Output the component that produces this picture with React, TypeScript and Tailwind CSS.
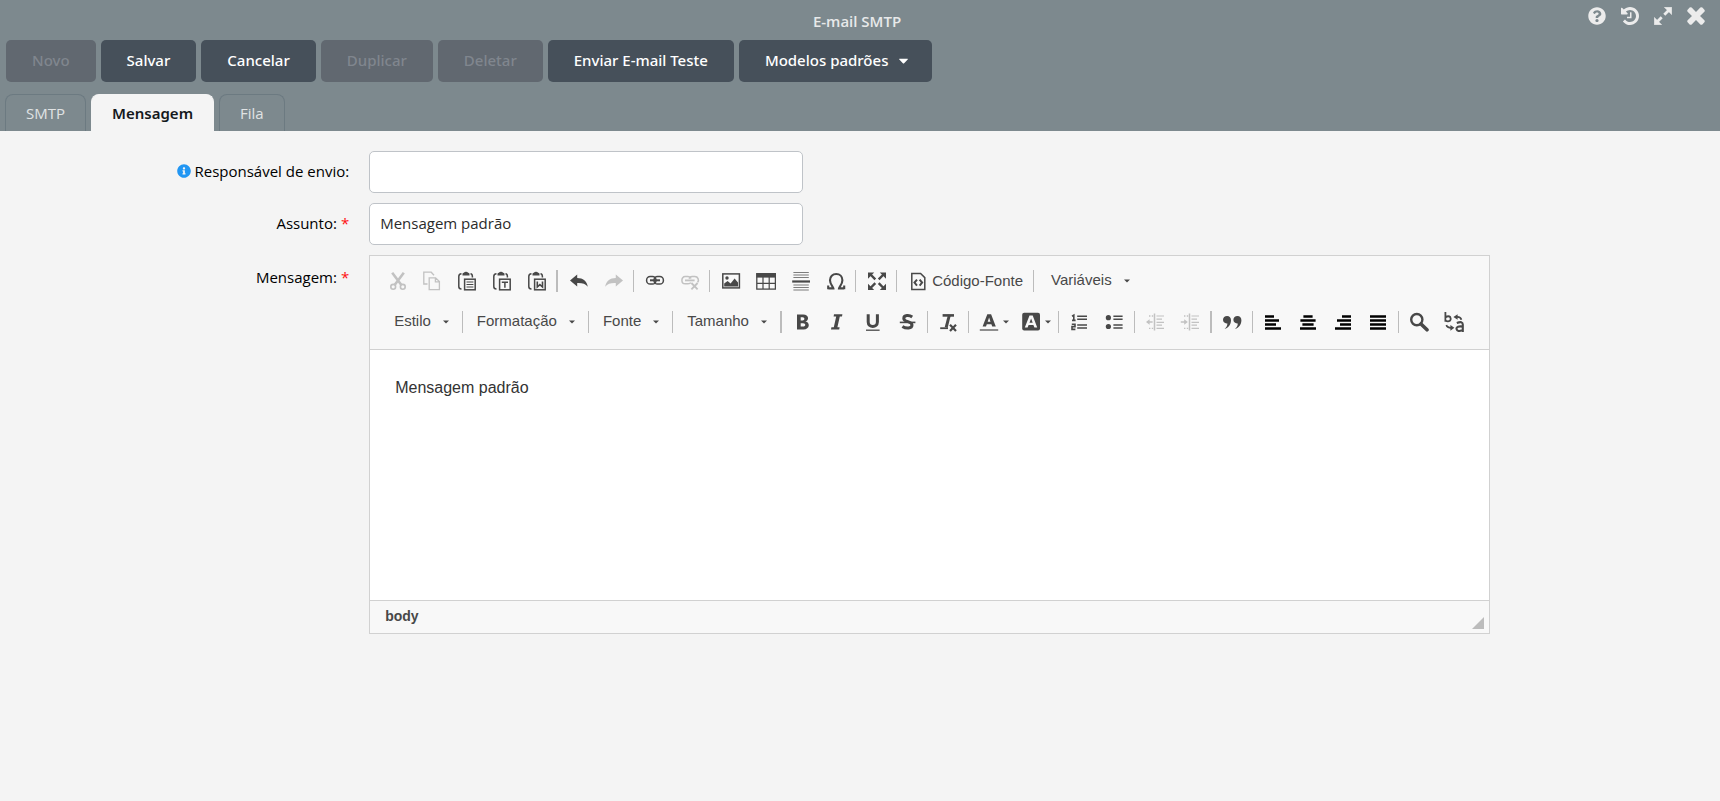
import React from "react";
import { FaCaretDown, FaInfoCircle, FaQuestionCircle } from "react-icons/fa";

function Glyph({ children }: { children: React.ReactNode }) {
  return (
    <svg
      width="20"
      height="20"
      viewBox="0 0 20 20"
      fill="none"
      stroke="currentColor"
      strokeWidth="1.5"
      aria-hidden="true"
      className="shrink-0"
    >
      {children}
    </svg>
  );
}

const clipboard = (
  <>
    <path d="M4.5 2.8 Q1.8 3 1.8 5.5 V15.5 Q1.8 18 4.5 18" />
    <path d="M13.5 2.8 Q15.4 3 15.4 5.5 V6.5" />
    <path d="M5.5 4.6 V3 Q5.5 1.8 7 1.8 Q7.3 .8 9 .8 Q10.7 .8 11 1.8 Q12.5 1.8 12.5 3 V4.6 Z" fill="currentColor" stroke="none" />
    <rect x="7.6" y="8.2" width="10.6" height="10.6" />
  </>
);

const icons = {
  cut: (
    <>
      <path d="M5.2 1.8 L14.4 14 M16.8 1.8 L7.6 14" strokeWidth="2.6" />
      <circle cx="6.2" cy="15.8" r="2.4" strokeWidth="1.6" />
      <circle cx="15.8" cy="15.8" r="2.4" strokeWidth="1.6" />
    </>
  ),
  copy: (
    <>
      <path d="M5.5 13 H1.8 V1.2 H9.2 L12 4.2" strokeWidth="1.3" />
      <path d="M7.2 6.8 H13.6 L17.4 10.6 V18.6 H7.2 Z M13.4 7 V10.8 H17.4" strokeWidth="1.3" />
    </>
  ),
  paste: (
    <>
      {clipboard}
      <path d="M9.5 11 H16.4 M9.5 13.5 H16.4 M9.5 16 H16.4" strokeWidth="1.2" />
    </>
  ),
  pasteText: (
    <>
      {clipboard}
      <path d="M9.8 11.2 H16 M12.9 11 V16.8" />
    </>
  ),
  pasteWord: (
    <>
      {clipboard}
      <path d="M10.3 10.4 V16 L12.9 13.6 L15.5 16 V10.4" strokeWidth="1.6" />
    </>
  ),
  undo: (
    <path d="M1 9.4 L8.2 3.4 V7 C14 7 18 9.8 18.8 15.8 C16.4 12.6 13 11.8 8.2 12 V15.6 Z" fill="currentColor" stroke="none" />
  ),
  redo: (
    <path d="M19 9.4 L11.8 3.4 V7 C6 7 2 9.8 1.2 15.8 C3.6 12.6 7 11.8 11.8 12 V15.6 Z" fill="currentColor" stroke="none" />
  ),
  link: (
    <>
      <rect x="1.6" y="5.6" width="9.4" height="7.4" rx="3.6" strokeWidth="1.5" />
      <rect x="9" y="5.6" width="9.4" height="7.4" rx="3.6" strokeWidth="1.5" />
      <path d="M5 9.3 H15" strokeWidth="2" />
    </>
  ),
  unlink: (
    <>
      <path d="M10.8 11.6 C10 12.8 9 12.8 5.2 12.8 C.8 12.8 .8 5.6 5.2 5.6 H8 C9.6 5.6 10.6 6.4 11 7.6" />
      <path d="M9 7.6 C9.6 6.2 10.6 5.6 12 5.6 H14.8 C18 5.6 19.4 9 17.6 11.4" />
      <path d="M5 9.4 H14.6" strokeWidth="1.8" />
      <path d="M11.4 12 L17.6 18.4 M17.6 12 L11.4 18.4" strokeWidth="1.8" />
    </>
  ),
  image: (
    <>
      <rect x="1.8" y="2.9" width="16.6" height="14" strokeWidth="1.5" />
      <circle cx="6" cy="7" r="1.7" fill="currentColor" stroke="none" />
      <path d="M3.2 15.6 V12.4 L6.6 10 L9.6 12.6 L13.6 7.6 L17 11.6 V15.6 Z" fill="currentColor" stroke="none" />
    </>
  ),
  table: (
    <>
      <rect x=".8" y="2.7" width="18.6" height="15.4" strokeWidth="1.3" />
      <path d="M.4 2.2 H19.8 V6.6 H.4 Z" fill="currentColor" stroke="none" />
      <path d="M1 12.4 H19.4 M7 6 V18 M13.2 6 V18" strokeWidth="1.2" />
    </>
  ),
  rule: (
    <>
      <path d="M2.4 1.5 H17.8 M2.4 4 H17.8 M2.4 6.5 H17.8 M2.4 14 H17.8 M2.4 16.5 H17.8 M2.4 19 H17.8" strokeWidth="1.2" opacity=".7" />
      <path d="M1.2 10.5 H19" strokeWidth="2.2" />
    </>
  ),
  omega: (
    <path d="M2.4 17.4 H7.4 C7.2 15.4 4 13.6 4 9.2 C4 5.4 6.6 3 10.2 3 C13.8 3 16.4 5.4 16.4 9.2 C16.4 13.6 13.2 15.4 13 17.4 H18 M2.2 18.3 V14.6 M18.2 18.3 V14.6" strokeWidth="2.1" />
  ),
  maximize: (
    <>
      <path d="M3.5 3.5 L8.3 8.3 M16.5 3.5 L11.7 8.3 M3.5 17 L8.3 12.2 M16.5 17 L11.7 12.2" strokeWidth="2.4" />
      <path
        d="M1 1.6 H7.2 L1 7.8 Z M19 1.6 H12.8 L19 7.8 Z M1 19 V12.8 L7.2 19 Z M19 19 V12.8 L12.8 19 Z"
        fill="currentColor"
        stroke="none"
      />
    </>
  ),
  source: (
    <>
      <path d="M3.8 2.4 H12.6 L16.8 6.6 V18.6 H3.8 Z" strokeWidth="1.5" />
      <path d="M9 8.6 L6.500 11.6 L9 14.6 M11.6 8.6 L14.1 11.6 L11.6 14.6" strokeWidth="2" />
    </>
  ),
  bold: (
    <path
      d="M5 2.4 H11.2 C17.2 2.4 17.4 8.4 13.4 9.4 C18.4 10.2 18 17.4 11.6 17.4 H5 Z M8.7 5.2 V8.4 H10.6 C13 8.4 13 5.2 10.6 5.2 Z M8.7 11.2 V14.6 H11 C14 14.6 14 11.2 11 11.2 Z"
      fill="currentColor"
      fillRule="evenodd"
      stroke="none"
    />
  ),
  italic: (
    <path d="M7 2.2 H15.4 L15 4.6 H12.8 L10.4 15.2 H12.6 L12.2 17.4 H4 L4.4 15.2 H6.8 L9.2 4.6 H6.6 Z" fill="currentColor" stroke="none" />
  ),
  underline: (
    <>
      <path d="M6.2 2.2 V10 C6.2 16 15.4 16 15.4 10 V2.2" strokeWidth="3" />
      <path d="M4 18.2 H17.6" strokeWidth="1.3" />
    </>
  ),
  strike: (
    <>
      <path d="M15.2 5 C12.2 2.8 6.8 3 6.8 6.4 C6.8 10.2 15 9.2 15 13 C15 16.8 9 16.8 5.4 14.4" strokeWidth="3" />
      <path d="M2.8 10.4 H18.4" strokeWidth="1.6" />
    </>
  ),
  removeFormat: (
    <>
      <path d="M4.6 3.4 H16" strokeWidth="2.6" />
      <path d="M11.4 3 L8.2 15.4" strokeWidth="3" />
      <path d="M2.2 16.2 H10" strokeWidth="1.8" />
      <path d="M12 12.8 L18 19 M18 12.8 L12 19" strokeWidth="2.2" />
    </>
  ),
  textColor: (
    <>
      <path
        d="M8.3 2.2 H12.1 L16.8 14.6 H13.2 L12.4 12.2 H7.8 L7 14.6 H3.6 Z M10.1 5.6 L8.7 9.8 H11.5 Z"
        fill="currentColor"
        fillRule="evenodd"
        stroke="none"
      />
      <path d="M.8 18 H19.2" strokeWidth="2" opacity=".6" />
    </>
  ),
  fillColor: (
    <>
      <rect x="1.2" y=".8" width="17.8" height="17.8" rx="2" fill="currentColor" stroke="none" />
      <path
        d="M8.5 3.4 H11.7 L16.2 15.6 H13.4 L12.4 13 H7.6 L6.6 15.6 H3.8 Z M10.1 6.4 L8.5 10.8 H11.7 Z"
        fill="#f8f8f8"
        fillRule="evenodd"
        stroke="none"
      />
    </>
  ),
  ordered: (
    <>
      <path d="M8.2 4.2 H18 M8.2 7.2 H18 M8.2 13 H18 M8.2 16 H18" strokeWidth="1.4" />
      <path d="M3 4.2 L4.8 3.2 V8.6 M3 8.4 H6.6 M2.8 12.2 H6 V14.6 H3 V17.4 H6.4" strokeWidth="1.6" />
    </>
  ),
  bullets: (
    <>
      <path d="M9.4 4.2 H18.6 M9.4 7.2 H18.6 M9.4 13 H18.6 M9.4 16 H18.6" strokeWidth="1.5" />
      <circle cx="4.4" cy="5.7" r="2.6" fill="currentColor" stroke="none" />
      <circle cx="4.4" cy="14.5" r="2.6" fill="currentColor" stroke="none" />
    </>
  ),
  outdent: (
    <>
      <path d="M9.5 1.5 V18.5" />
      <path d="M11.5 4 H19 M11.5 7.2 H17 M11.5 10.4 H19 M11.5 13.2 H17 M11.5 16.4 H19" strokeWidth="1.2" />
      <path d="M4 4 H5.4 M6.8 4 H8.2 M4 16.4 H5.4 M6.8 16.4 H8.2 M2 10 H7.6" strokeWidth="1.3" />
      <path d="M1 10 L4.6 7.2 V12.8 Z" fill="currentColor" stroke="none" />
    </>
  ),
  indent: (
    <>
      <path d="M9.5 1.5 V18.5" />
      <path d="M11.5 4 H19 M11.5 7.2 H17 M11.5 10.4 H19 M11.5 13.2 H17 M11.5 16.4 H19" strokeWidth="1.2" />
      <path d="M4 4 H5.4 M6.8 4 H8.2 M4 16.4 H5.4 M6.8 16.4 H8.2 M.8 10 H6" strokeWidth="1.3" />
      <path d="M7.8 10 L4.2 7.2 V12.8 Z" fill="currentColor" stroke="none" />
    </>
  ),
  quote: (
    <path
      d="M5 4 C7.6 4 9 5.8 9 8.2 C9 12.6 6.6 15.6 2.6 17 C4.4 15.2 5.4 13.4 5.4 11.4 C2.8 11.8 1 10 1 7.8 C1 5.6 2.8 4 5 4 Z M15.4 4 C18 4 19.4 5.8 19.4 8.2 C19.4 12.6 17 15.6 13 17 C14.8 15.2 15.8 13.4 15.8 11.4 C13.2 11.8 11.4 10 11.4 7.8 C11.4 5.6 13.2 4 15.4 4 Z"
      fill="currentColor"
      stroke="none"
    />
  ),
  left: (
    <path d="M2 4.5 H11 M2 8.5 H16 M2 12.5 H13 M2 16.5 H18" stroke="#000" strokeWidth="2.4" />
  ),
  center: (
    <path d="M5.4 4.5 H14.6 M2.4 8.5 H17.6 M4.4 12.5 H15.6 M2 16.5 H18" stroke="#000" strokeWidth="2.4" />
  ),
  right: (
    <path d="M9 4.5 H18 M4 8.5 H18 M7 12.5 H18 M2 16.5 H18" stroke="#000" strokeWidth="2.4" />
  ),
  justify: (
    <path d="M2 4.5 H18 M2 8.5 H18 M2 12.5 H18 M2 16.5 H18" stroke="#000" strokeWidth="2.4" />
  ),
  find: (
    <>
      <circle cx="7.8" cy="7.6" r="5.6" strokeWidth="2.4" />
      <path d="M12 12 L18 17.8" strokeWidth="3.6" strokeLinecap="round" />
    </>
  ),
  replace: (
    <>
      <path d="M1.4 0 V9.8 M1.4 5.4 Q4.4 3.4 6.2 5 Q7.2 6.8 6.2 8.6 Q4 10 1.4 8.6" strokeWidth="1.8" />
      <path d="M12.800 11 Q18.800 8.600 18.800 12.600 V20 M18.800 14.600 Q12.400 13.600 12.400 16.800 Q13.600 20.800 18.800 17.600" strokeWidth="2.1" />
      <path d="M12 5 Q16.6 4.4 17.4 7.8 M2.4 13 Q3 16 8 15.8" strokeWidth="1.7" />
      <path d="M9.4 5 L13.6 2.2 V7.8 Z M10.4 15.8 L6.4 13 V18.8 Z" fill="currentColor" stroke="none" />
    </>
  ),
};

function HistoryIcon() {
  return (
    <svg width="18" height="18" viewBox="0 128 1536 1536" fill="currentColor" aria-hidden="true">
      <path d="M1536 896q0 156-61 298t-164 245-245 164-298 61q-172 0-327-72.500t-264-204.500q-7-10-6.500-22.500t8.500-20.500l137-138q10-9 25-9 16 2 23 12 73 95 179 147t225 52q104 0 198.500-40.500t163.500-109.500 109.500-163.500 40.500-198.500-40.500-198.500-109.500-163.500-163.500-109.500-198.500-40.500q-98 0-188 35.500t-160 101.500l137 138q31 30 14 69-17 40-59 40h-448q-26 0-45-19t-19-45v-448q0-42 40-59 39-17 69 14l130 129q107-101 244.500-156.500t284.500-55.500q156 0 298 61t245 164 164 245 61 298zm-640-288v448q0 14-9 23t-23 9h-320q-14 0-23-9t-9-23v-64q0-14 9-23t23-9h224v-352q0-14 9-23t23-9h64q14 0 23 9t9 23z" />
    </svg>
  );
}

function ExpandIcon() {
  return (
    <svg width="18" height="18" viewBox="0 0 18 18" fill="currentColor" aria-hidden="true">
      <path d="M17.7 .3 V7.6 L10.4 .3 Z M.3 17.7 V10.4 L7.6 17.700 Z" stroke="currentColor" strokeWidth=".6" strokeLinejoin="round" />
      <path d="M15.5 2.5 L10.300 7.700 M2.500 15.500 L7.700 10.300" stroke="currentColor" strokeWidth="2.800" />
    </svg>
  );
}

function CloseIcon() {
  return (
    <svg width="18" height="18" viewBox="96 352 1216 1216" fill="currentColor" aria-hidden="true">
      <path d="M1298 1322q0 40-28 68l-136 136q-28 28-68 28t-68-28l-294-294-294 294q-28 28-68 28t-68-28l-136-136q-28-28-28-68t28-68l294-294-294-294q-28-28-28-68t28-68l136-136q28-28 68-28t68 28l294 294 294-294q28-28 68-28t68 28l136 136q28 28 28 68t-28 68l-294 294 294 294q28 28 28 68z" />
    </svg>
  );
}

function Arrow() {
  return (
    <svg width="6" height="4" viewBox="0 0 6 4" fill="currentColor" aria-hidden="true" className="shrink-0">
      <path d="M0 .4 H6 L3 3.6 Z" />
    </svg>
  );
}

function Tool({ icon, label, disabled = false }: { icon: keyof typeof icons; label: string; disabled?: boolean }) {
  return (
    <button
      type="button"
      aria-label={label}
      disabled={disabled}
      className="flex h-8 w-[35px] items-center justify-center disabled:opacity-30"
    >
      <Glyph>{icons[icon]}</Glyph>
    </button>
  );
}

function ColorTool({ icon, label }: { icon: keyof typeof icons; label: string }) {
  return (
    <button type="button" aria-label={label} className="flex h-8 items-center gap-1 pr-[5px] pl-[7px]">
      <Glyph>{icons[icon]}</Glyph>
      <Arrow />
    </button>
  );
}

function Combo({ label }: { label: string }) {
  return (
    <button type="button" className="flex h-8 items-center gap-3 px-[11px] text-[15px]">
      <span className="pb-0.5">{label}</span>
      <Arrow />
    </button>
  );
}

function Divider({ thick = false }: { thick?: boolean }) {
  return (
    <span
      className={
        thick
          ? "mr-[3px] ml-0.5 h-[22px] w-0.5 bg-[#bcbcbc]"
          : "mr-[3px] ml-0.5 h-[22px] w-px bg-[#bcbcbc]"
      }
    />
  );
}

function Action({ label, disabled = false }: { label: string; disabled?: boolean }) {
  return (
    <button
      type="button"
      disabled={disabled}
      className="h-[42px] rounded-[5px] bg-[#46505a] px-[26px] pb-0.5 font-['Noto_Sans',sans-serif] font-medium text-white disabled:bg-[#616870] disabled:text-[#80868e]"
    >
      {label}
    </button>
  );
}

function Tab({ label, active = false }: { label: string; active?: boolean }) {
  return (
    <button
      type="button"
      role="tab"
      aria-selected={active}
      className={
        active
          ? "h-[37px] rounded-t-lg border border-b-0 border-[#f4f4f4] bg-[#f4f4f4] px-5 font-['Noto_Sans',sans-serif] font-semibold text-[#14191c]"
          : "h-[37px] rounded-t-lg border border-b-0 border-[#6c7a81] px-5 text-[#e0e3e4]"
      }
    >
      {label}
    </button>
  );
}

const fieldClass =
  "h-[42px] w-[25.2%] rounded-[5px] border border-[#bfc3c8] bg-white px-2.5 pb-0.5 text-[#2b2b2b] outline-none";

function Label({ htmlFor, children }: { htmlFor: string; children: React.ReactNode }) {
  return (
    <label htmlFor={htmlFor} className="flex h-10 w-[20.3%] shrink-0 items-center justify-end text-black">
      {children}
    </label>
  );
}

const required = <span className="ml-1 text-[#ff1010]">*</span>;

export default function App() {
  return (
    <div className="min-h-screen bg-[#f4f4f4] font-['Open_Sans',sans-serif] text-[15px]">
      <header className="bg-[#7d898e]">
        <div className="grid h-10 grid-cols-[1fr_auto_1fr] pr-[15px] pl-[9px]">
          <h1 className="col-start-2 pt-2.5 font-semibold text-[#e8e9ea]">E-mail SMTP</h1>
          <div className="flex items-start justify-end gap-[15px] pt-[7px] text-[#ececec]">
            <button type="button" aria-label="Ajuda"><FaQuestionCircle className="size-[18px]" /></button>
            <button type="button" aria-label="Histórico"><HistoryIcon /></button>
            <button type="button" aria-label="Expandir"><ExpandIcon /></button>
            <button type="button" aria-label="Fechar"><CloseIcon /></button>
          </div>
        </div>
        <div className="flex gap-[5px] px-1.5">
          <Action label="Novo" disabled />
          <Action label="Salvar" />
          <Action label="Cancelar" />
          <Action label="Duplicar" disabled />
          <Action label="Deletar" disabled />
          <Action label="Enviar E-mail Teste" />
          <button
            type="button"
            className="flex h-[42px] items-center gap-2 rounded-[5px] bg-[#46505a] pr-[21px] pb-0.5 pl-[26px] font-['Noto_Sans',sans-serif] font-medium text-white"
          >
            Modelos padrões
            <FaCaretDown className="size-[15px]" />
          </button>
        </div>
        <div role="tablist" className="flex gap-[5px] px-[5px] pt-3">
          <Tab label="SMTP" />
          <Tab label="Mensagem" active />
          <Tab label="Fila" />
        </div>
      </header>

      <main className="flex flex-col gap-2.5 py-5">
        <div className="flex gap-5">
          <Label htmlFor="responsavel">
            <FaInfoCircle className="mr-[3px] size-3.5 text-[#2196f3]" />
            Responsável de envio:
          </Label>
          <input id="responsavel" type="text" className={fieldClass} />
        </div>
        <div className="flex gap-5">
          <Label htmlFor="assunto">Assunto: {required}</Label>
          <input id="assunto" type="text" defaultValue="Mensagem padrão" className={fieldClass} />
        </div>
        <div className="flex gap-5">
          <div className="contents *:mt-0.5">
            <Label htmlFor="mensagem">Mensagem: {required}</Label>
          </div>
          <div className="w-[65.15%] border border-[#d1d1d1] bg-white font-['Liberation_Sans',Arial,sans-serif] text-[#484848]">
            <div className="flex flex-col gap-[9px] border-b border-[#d1d1d1] bg-[#f8f8f8] pt-[9px] pb-[11px] pl-[9px] text-[15px]">
              <div className="flex flex-wrap items-center">
                <Tool icon="cut" label="Recortar" disabled />
                <Tool icon="copy" label="Copiar" disabled />
                <Tool icon="paste" label="Colar" />
                <Tool icon="pasteText" label="Colar como texto sem formatação" />
                <Tool icon="pasteWord" label="Colar do Word" />
                <Divider thick />
                <Tool icon="undo" label="Desfazer" />
                <Tool icon="redo" label="Refazer" disabled />
                <Divider />
                <Tool icon="link" label="Inserir link" />
                <Tool icon="unlink" label="Remover link" disabled />
                <Divider />
                <Tool icon="image" label="Imagem" />
                <Tool icon="table" label="Tabela" />
                <Tool icon="rule" label="Linha horizontal" />
                <Tool icon="omega" label="Caractere especial" />
                <Divider />
                <Tool icon="maximize" label="Maximizar" />
                <Divider />
                <button type="button" className="flex h-8 items-center gap-1 px-2">
                  <Glyph>{icons.source}</Glyph>
                  Código-Fonte
                </button>
                <Divider />
                <div className="ml-[3px]">
                  <Combo label="Variáveis" />
                </div>
              </div>
              <div className="flex flex-wrap items-center pl-1">
                <Combo label="Estilo" />
                <Divider />
                <Combo label="Formatação" />
                <Divider />
                <Combo label="Fonte" />
                <Divider />
                <Combo label="Tamanho" />
                <Divider thick />
                <Tool icon="bold" label="Negrito" />
                <Tool icon="italic" label="Itálico" />
                <Tool icon="underline" label="Sublinhado" />
                <Tool icon="strike" label="Tachado" />
                <Divider />
                <Tool icon="removeFormat" label="Remover formatação" />
                <Divider />
                <ColorTool icon="textColor" label="Cor do texto" />
                <ColorTool icon="fillColor" label="Cor do plano de fundo" />
                <Divider />
                <Tool icon="ordered" label="Lista numerada" />
                <Tool icon="bullets" label="Lista sem números" />
                <Divider />
                <Tool icon="outdent" label="Diminuir recuo" disabled />
                <Tool icon="indent" label="Aumentar recuo" disabled />
                <Divider thick />
                <Tool icon="quote" label="Citação" />
                <Divider />
                <Tool icon="left" label="Alinhar à esquerda" />
                <Tool icon="center" label="Centralizar" />
                <Tool icon="right" label="Alinhar à direita" />
                <Tool icon="justify" label="Justificado" />
                <Divider />
                <Tool icon="find" label="Localizar" />
                <Tool icon="replace" label="Substituir" />
              </div>
            </div>
            <textarea
              id="mensagem"
              defaultValue="Mensagem padrão"
              className="block h-[250px] w-full resize-none px-[25px] py-[25px] text-base leading-[26px] text-[#333] outline-none"
            />
            <div className="flex h-[33px] items-center justify-between border-t border-[#d1d1d1] bg-[#f8f8f8] pr-[5px] pb-0.5 pl-[15px] text-sm font-bold">
              body
              <svg width="12" height="12" viewBox="0 0 12 12" fill="#bcbcbc" aria-hidden="true" className="mb-0.5 self-end">
                <path d="M12 0 V12 H0 Z" />
              </svg>
            </div>
          </div>
        </div>
      </main>
    </div>
  );
}
